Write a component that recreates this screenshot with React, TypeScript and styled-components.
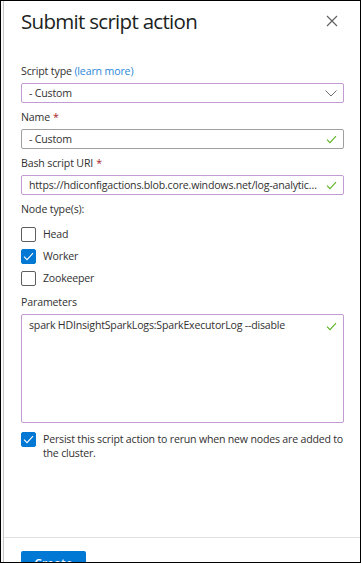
import styled, { createGlobalStyle } from "styled-components";

const GlobalStyle = createGlobalStyle`
    html, body {
        margin: 0;
        padding: 0;
        background: #ffffff;
    }
    body {
        font-family: "Open Sans", "Noto Sans", sans-serif;
        color: #323130;
    }
`;

const Frame = styled.div`
    box-sizing: border-box;
    width: 361px;
    height: 563px;
    border: 1px solid #000;
    display: flex;
    overflow: hidden;
    background: #fff;
`;

const Backdrop = styled.div`
    width: 2px;
    flex-shrink: 0;
    background: #fafafa;
`;

const Panel = styled.div`
    flex: 1;
    min-width: 0;
    display: flex;
    flex-direction: column;
    border-left: 1px solid #c8c6c4;
    background: #fff;
`;

const Body = styled.div`
    flex: 1;
    min-width: 0;
    min-height: 0;
    padding: 0 16px 0 17px;
    display: flex;
    flex-direction: column;
`;

const Header = styled.div`
    display: flex;
    align-items: center;
    justify-content: space-between;
    height: 40px;
    margin-bottom: 22px;
`;

const Title = styled.h1`
    margin: 0;
    font-size: 20.5px;
    font-weight: 400;
    color: #201f1e;
    letter-spacing: -0.7px;
`;

const CloseButton = styled.button`
    border: none;
    background: none;
    padding: 0;
    margin-right: 6px;
    width: 12px;
    height: 12px;
    display: flex;
`;

const Field = styled.div`
    display: flex;
    flex-direction: column;
    margin-bottom: 6px;
`;

const Label = styled.label`
    font-size: 10.6px;
    line-height: 16px;
    letter-spacing: -0.15px;
    margin-bottom: 4px;
    color: #323130;
`;

const Link = styled.span`
    color: #2b88d8;
`;

const Required = styled.span`
    color: #a4262c;
    margin-left: 3px;
`;

const Box = styled.div<{ $focus?: boolean; $tall?: boolean }>`
    box-sizing: border-box;
    height: ${(p) => (p.$tall ? "109px" : "20px")};
    border: 1px solid ${(p) => (p.$focus ? "#c39bd3" : "#a19f9d")};
    border-radius: 2px;
    display: flex;
    align-items: ${(p) => (p.$tall ? "flex-start" : "center")};
    gap: 6px;
    padding: ${(p) => (p.$tall ? "3px 6px 0 7px" : "0 6px 0 7px")};
    font-size: 10.6px;
    letter-spacing: -0.2px;
    color: #323130;
`;

const BoxText = styled.span`
    flex: 1;
    min-width: 0;
    white-space: nowrap;
    overflow: hidden;
    text-overflow: ellipsis;
`;

const TickSlot = styled.span<{ $top?: number }>`
    display: flex;
    margin-top: ${(p) => p.$top ?? 0}px;
`;

const Group = styled.div`
    display: flex;
    flex-direction: column;
    gap: 7px;
    margin: 6px 0 8px;
`;

const CheckRow = styled.div`
    display: flex;
    align-items: flex-start;
    gap: 7px;
    font-size: 10.6px;
    letter-spacing: -0.2px;
    line-height: 15px;
`;

const CheckBox = styled.span<{ $checked?: boolean }>`
    box-sizing: border-box;
    width: 15px;
    height: 15px;
    flex-shrink: 0;
    border-radius: 2px;
    border: 1px solid ${(p) => (p.$checked ? "#0078d4" : "#605e5c")};
    background: ${(p) => (p.$checked ? "#0078d4" : "#fff")};
    display: flex;
    align-items: center;
    justify-content: center;
`;

const Persist = styled(CheckRow)`
    margin-top: 3px;
    line-height: 14px;
`;

const Footer = styled.div`
    box-sizing: border-box;
    height: 25px;
    flex-shrink: 0;
    overflow: hidden;
    border-top: 1px solid #e1dfdd;
    padding: 13px 0 0 17px;
`;

const PrimaryButton = styled.button`
    width: 65px;
    height: 30px;
    border: none;
    border-radius: 2px;
    background: #0078d4;
    color: #fff;
    font-family: inherit;
    font-size: 12px;
    font-weight: 600;
    padding: 4px 0 0;
    display: flex;
    justify-content: center;
`;

const Tick = ({ color = "#5db31f" }: { color?: string }) => (
    <svg width="11" height="9" viewBox="0 0 11 9" fill="none">
        <path d="M1 4.6 L4 7.6 L10 1.2" stroke={color} strokeWidth="1.1" />
    </svg>
);

const Chevron = () => (
    <svg width="12" height="7" viewBox="0 0 12 7" fill="none">
        <path d="M0.5 0.5 L6 6 L11.5 0.5" stroke="#605e5c" strokeWidth="0.9" />
    </svg>
);

const nodes = [
    { name: "Head", checked: false },
    { name: "Worker", checked: true },
    { name: "Zookeeper", checked: false },
];

const App = () => {
    return (
        <>
            <GlobalStyle />
            <Frame>
                <Backdrop />
                <Panel>
                    <Body>
                        <Header>
                            <Title>Submit script action</Title>
                            <CloseButton aria-label="Close">
                                <svg width="12" height="12" viewBox="0 0 12 12">
                                    <path
                                        d="M1 1 L11 11 M11 1 L1 11"
                                        stroke="#605e5c"
                                        strokeWidth="1.1"
                                    />
                                </svg>
                            </CloseButton>
                        </Header>

                        <Field>
                            <Label>
                                Script type <Link>(learn more)</Link>
                            </Label>
                            <Box $focus>
                                <BoxText>- Custom</BoxText>
                                <Chevron />
                            </Box>
                        </Field>

                        <Field>
                            <Label>
                                Name<Required>*</Required>
                            </Label>
                            <Box>
                                <BoxText>- Custom</BoxText>
                                <TickSlot>
                                    <Tick />
                                </TickSlot>
                            </Box>
                        </Field>

                        <Field>
                            <Label>
                                Bash script URI<Required>*</Required>
                            </Label>
                            <Box $focus>
                                <BoxText>
                                    https://hdiconfigactions.blob.core.windows.net/log-analytics-patch/spark
                                </BoxText>
                                <TickSlot>
                                    <Tick />
                                </TickSlot>
                            </Box>
                        </Field>

                        <Label>Node type(s):</Label>
                        <Group>
                            {nodes.map((n) => (
                                <CheckRow key={n.name}>
                                    <CheckBox $checked={n.checked}>
                                        {n.checked && <Tick color="#fff" />}
                                    </CheckBox>
                                    {n.name}
                                </CheckRow>
                            ))}
                        </Group>

                        <Field>
                            <Label>Parameters</Label>
                            <Box $focus $tall>
                                <BoxText>
                                    spark HDInsightSparkLogs:SparkExecutorLog --disable
                                </BoxText>
                                <TickSlot $top={4}>
                                    <Tick />
                                </TickSlot>
                            </Box>
                        </Field>

                        <Persist>
                            <CheckBox $checked>
                                <Tick color="#fff" />
                            </CheckBox>
                            <span>
                                Persist this script action to rerun when new nodes are added to
                                the cluster.
                            </span>
                        </Persist>
                    </Body>
                    <Footer>
                        <PrimaryButton>Create</PrimaryButton>
                    </Footer>
                </Panel>
            </Frame>
        </>
    );
};

export default App;
